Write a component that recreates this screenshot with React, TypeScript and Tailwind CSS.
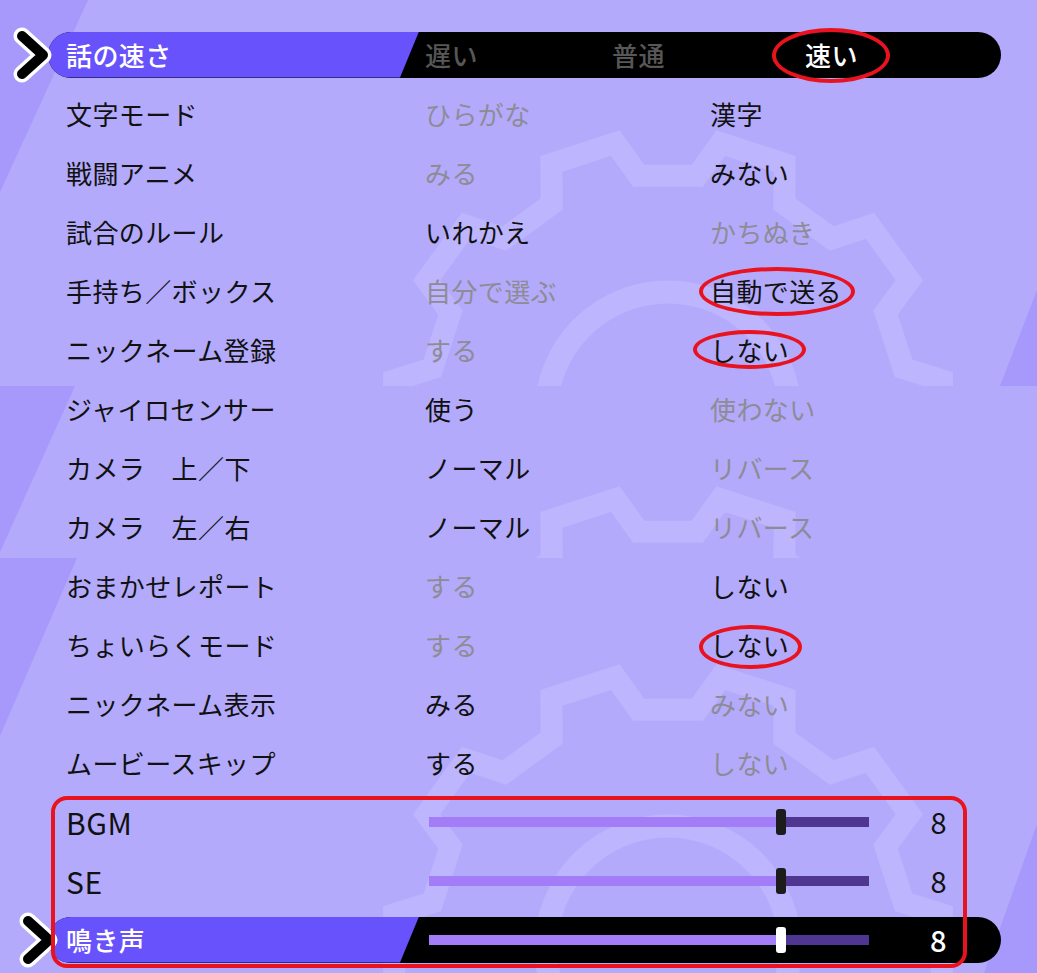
import React from 'react';

type Row = { label: string; a: string; b: string; sel: 'a' | 'b' };

const rows: Row[] = [
  { label: '文字モード', a: 'ひらがな', b: '漢字', sel: 'b' },
  { label: '戦闘アニメ', a: 'みる', b: 'みない', sel: 'b' },
  { label: '試合のルール', a: 'いれかえ', b: 'かちぬき', sel: 'a' },
  { label: '手持ち／ボックス', a: '自分で選ぶ', b: '自動で送る', sel: 'b' },
  { label: 'ニックネーム登録', a: 'する', b: 'しない', sel: 'b' },
  { label: 'ジャイロセンサー', a: '使う', b: '使わない', sel: 'a' },
  { label: 'カメラ　上／下', a: 'ノーマル', b: 'リバース', sel: 'a' },
  { label: 'カメラ　左／右', a: 'ノーマル', b: 'リバース', sel: 'a' },
  { label: 'おまかせレポート', a: 'する', b: 'しない', sel: 'b' },
  { label: 'ちょいらくモード', a: 'する', b: 'しない', sel: 'b' },
  { label: 'ニックネーム表示', a: 'みる', b: 'みない', sel: 'a' },
  { label: 'ムービースキップ', a: 'する', b: 'しない', sel: 'a' },
];

// gear outline for the background pattern
function gearPath(cx: number, cy: number, rr: number, rt: number) {
  const pts: string[] = [];
  for (let i = 0; i < 10; i++) {
    const a = -90 + 18 + i * 36;
    const corners: [number, number][] = [
      [rr, a - 11],
      [rt, a - 7],
      [rt, a + 7],
      [rr, a + 11],
    ];
    corners.forEach(([r, d]) => {
      const t = (d * Math.PI) / 180;
      pts.push(`${(cx + r * Math.cos(t)).toFixed(1)},${(cy + r * Math.sin(t)).toFixed(1)}`);
    });
  }
  return 'M' + pts.join('L') + 'Z';
}

function Background() {
  const tiles = [
    { y0: 0, y1: 386, cy: 414 },
    { y0: 386, y1: 558, cy: 770 },
    { y0: 558, y1: 973, cy: 948 },
  ];
  return (
    <svg className="absolute inset-0" width="1037" height="973" viewBox="0 0 1037 973">
      <defs>
        {tiles.map((t, i) => (
          <clipPath key={i} id={`tile${i}`}>
            <rect x="0" y={t.y0} width="1037" height={t.y1 - t.y0} />
          </clipPath>
        ))}
      </defs>
      {tiles.map((t, i) => (
        <g key={i} clipPath={`url(#tile${i})`} fill="none" stroke="#bdb5fd">
          <path d={gearPath(668, t.cy, 240, 276)} strokeWidth="22" strokeLinejoin="miter" />
          <circle cx="668" cy={t.cy} r="122" strokeWidth="23" />
        </g>
      ))}
      <g fill="#a699fb">
        <polygon points="0,0 88,0 0,192" />
        <polygon points="1037,290 1037,386 1000,386" />
        <polygon points="0,386 75,386 0,552" />
        <polygon points="0,558 77,558 0,736" />
        <polygon points="1037,824 1037,973 984,973" />
      </g>
    </svg>
  );
}

function Cursor({ dx = 0 }: { dx?: number }) {
  return (
    <svg className="absolute left-0 top-0" width="70" height="59" viewBox="0 0 70 59">
      <g transform={`translate(${dx} 0)`} fill="none" strokeLinecap="round" strokeLinejoin="round">
        <polyline points="22,11 43,30 22,49" stroke="#ffffff" strokeWidth="17" />
        <polyline points="22,11 43,30 22,49" stroke="#000000" strokeWidth="10" />
      </g>
    </svg>
  );
}

function Bar({ children }: { children: React.ReactNode }) {
  return (
    <div className="relative ml-[48px] flex h-[46px] w-[953px] items-center overflow-hidden rounded-full bg-black">
      <div className="absolute inset-y-0 left-0 w-[371px] bg-[#6852fc] [clip-path:polygon(0_0,100%_0,calc(100%_-_19px)_100%,0_100%)]" />
      <div className="relative flex items-center pl-[18px]">{children}</div>
    </div>
  );
}

function Slider({ active }: { active?: boolean }) {
  return (
    <div className="relative flex h-[10px] w-[440px]">
      <div className="h-full w-[351px] bg-[#a37df7]" />
      <div className="h-full flex-1 bg-[#4e3691]" />
      <div
        className={`absolute left-[347px] top-1/2 h-[26px] w-[10px] -translate-y-1/2 rounded-[3px] ${
          active ? 'bg-white' : 'bg-[#1c1c1c]'
        }`}
      />
    </div>
  );
}

export default function App() {
  const on = 'text-[#111111]';
  const off = 'text-[#8d8c96]';
  return (
    <div
      className="relative h-[973px] w-[1037px] overflow-hidden bg-[#b3aafc] text-[26px] leading-none tracking-[0.4px]"
      style={{ fontFamily: '"Noto Sans CJK JP", "Noto Sans", sans-serif' }}
    >
      <Background />

      <div className="relative flex flex-col pt-[25px]">
        {/* speed row, selected */}
        <div className="relative flex h-[59px] items-center">
          <Bar>
            <span className="w-[359px] font-medium text-white">話の速さ</span>
            <span className="w-[187px] font-medium text-[#575757]">遅い</span>
            <span className="w-[193px] font-medium text-[#575757]">普通</span>
            <span className="font-medium text-white">速い</span>
          </Bar>
          <Cursor />
        </div>

        {rows.map(r => (
          <div key={r.label} className="flex h-[59px] items-center pl-[66px]">
            <span className="w-[359px] text-[#111111]">{r.label}</span>
            <span className={`w-[285px] ${r.sel === 'a' ? on : off}`}>{r.a}</span>
            <span className={r.sel === 'b' ? on : off}>{r.b}</span>
          </div>
        ))}

        {['BGM', 'SE'].map(l => (
          <div key={l} className="flex h-[59px] items-center pl-[66px]">
            <span className="w-[363px] text-[30px] tracking-[0.5px] text-[#111111]">{l}</span>
            <Slider />
            <span className="w-[78px] text-right text-[29px] text-[#111111]">8</span>
          </div>
        ))}

        <div className="relative flex h-[59px] items-center">
          <Bar>
            <span className="w-[363px] font-medium text-white">鳴き声</span>
            <Slider active />
            <span className="w-[78px] text-right text-[29px] font-medium text-white">8</span>
          </Bar>
          <Cursor dx={6} />
        </div>
      </div>

      {/* red annotation marks */}
      <div className="absolute left-[772px] top-[28px] h-[55px] w-[118px] rounded-[50%] border-4 border-[#e8131f]" />
      <div className="absolute left-[699px] top-[267px] h-[49px] w-[156px] rounded-[50%] border-4 border-[#e8131f]" />
      <div className="absolute left-[693px] top-[330px] h-[39px] w-[113px] rounded-[50%] border-4 border-[#e8131f]" />
      <div className="absolute left-[699px] top-[625px] h-[44px] w-[103px] rounded-[50%] border-4 border-[#e8131f]" />
      <div className="absolute left-[51px] top-[796px] h-[172px] w-[916px] rounded-[16px] border-4 border-[#e8131f]" />
    </div>
  );
}
